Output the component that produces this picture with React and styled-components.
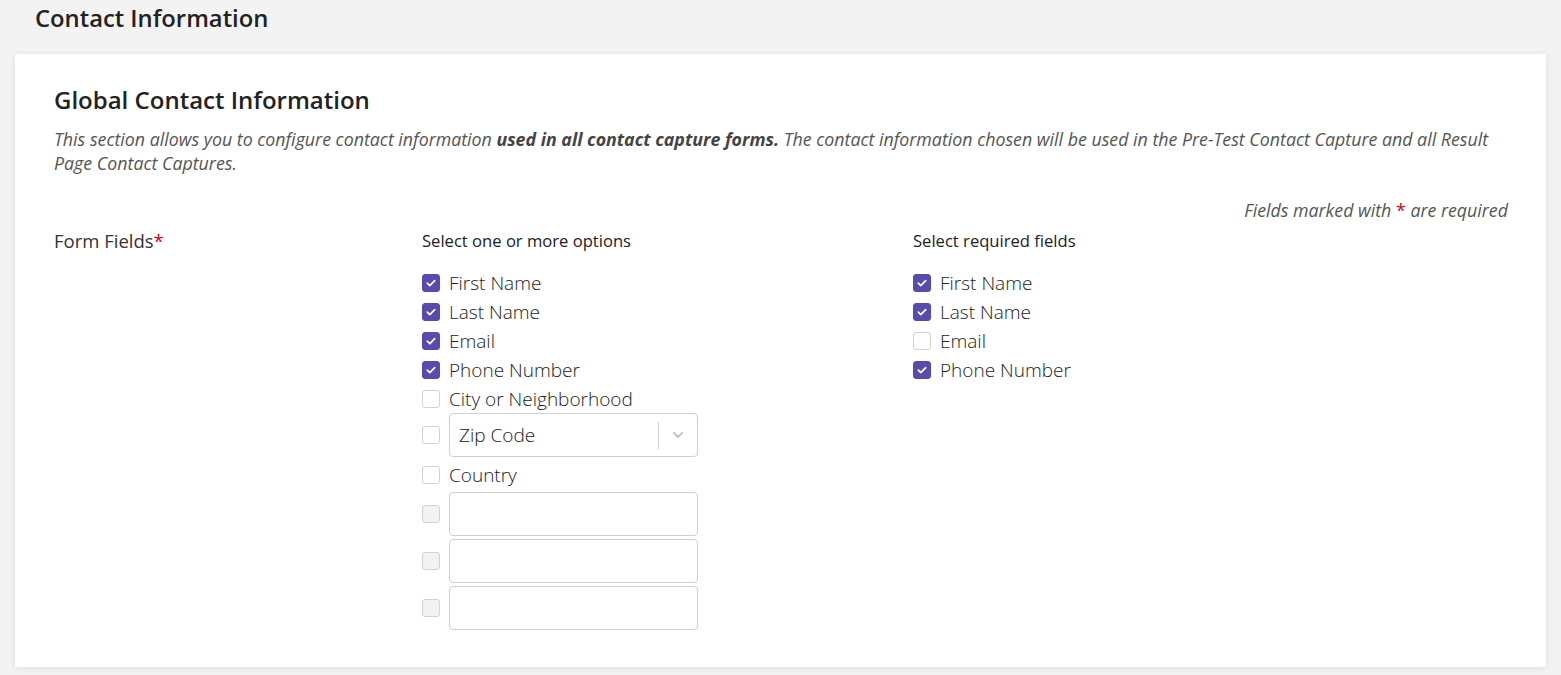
import React from 'react';
import styled, { createGlobalStyle } from 'styled-components';

const GlobalStyle = createGlobalStyle`
  body {
    margin: 0;
    background: #f3f3f3;
    font-family: 'Open Sans', 'Noto Sans', sans-serif;
    color: #222;
  }
`;

const options = [
  { label: 'First Name', checked: true },
  { label: 'Last Name', checked: true },
  { label: 'Email', checked: true },
  { label: 'Phone Number', checked: true },
  { label: 'City or Neighborhood', checked: false },
  { select: 'Zip Code' },
  { label: 'Country', checked: false },
  { input: true },
  { input: true },
  { input: true },
];

const required = [
  { label: 'First Name', checked: true },
  { label: 'Last Name', checked: true },
  { label: 'Email', checked: false },
  { label: 'Phone Number', checked: true },
];

const Check = ({ checked, disabled }) => (
  <Box checked={checked} disabled={disabled}>
    {checked && (
      <svg width="12" height="12" viewBox="0 0 12 12">
        <path d="M2.3 6.2l2.5 2.4 4.9-5" fill="none" stroke="#fff" strokeWidth="1.7" strokeLinecap="round" strokeLinejoin="round" />
      </svg>
    )}
  </Box>
);

const OptionList = ({ items }) => (
  <List>
    {items.map((item, i) => {
      if (item.select) {
        return (
          <FieldRow key={i} after>
            <Check />
            <Select>
              <SelectText>{item.select}</SelectText>
              <Separator />
              <Chevron>
                <svg width="14" height="14" viewBox="0 0 14 14">
                  <path d="M3 5l4 4 4-4" fill="none" stroke="#c4c4c4" strokeWidth="2" strokeLinecap="round" strokeLinejoin="round" />
                </svg>
              </Chevron>
            </Select>
          </FieldRow>
        );
      }
      if (item.input) {
        return (
          <FieldRow key={i} before>
            <Check disabled />
            <TextInput />
          </FieldRow>
        );
      }
      return (
        <Row key={i}>
          <Check checked={item.checked} />
          <Label>{item.label}</Label>
        </Row>
      );
    })}
  </List>
);

export default function App() {
  return (
    <>
      <GlobalStyle />
      <Page>
        <PageTitle>Contact Information</PageTitle>
        <Card>
          <Heading>Global Contact Information</Heading>
          <Description>
            This section allows you to configure contact information <b>used in all contact capture forms.</b> The
            contact information chosen will be used in the Pre-Test Contact Capture and all Result Page Contact
            Captures.
          </Description>
          <RequiredNote>
            Fields marked with <Star>*</Star> are required
          </RequiredNote>
          <Grid>
            <FieldLabel>
              Form Fields<Star>*</Star>
            </FieldLabel>
            <Column>
              <ColumnHeader>Select one or more options</ColumnHeader>
              <OptionList items={options} />
            </Column>
            <Column>
              <ColumnHeader>Select required fields</ColumnHeader>
              <OptionList items={required} />
            </Column>
          </Grid>
        </Card>
      </Page>
    </>
  );
}

const Page = styled.div`
  padding: 3px 15px 9px;
`;

const PageTitle = styled.h1`
  margin: 0 0 21px 20px;
  font-size: 23.8px;
  line-height: 30px;
  font-weight: 600;
  color: #222;
`;

const Card = styled.div`
  background: #fff;
  padding: 31px 38px 37px 39px;
  box-shadow: 0 1px 6px rgba(0, 0, 0, 0.09);
`;

const Heading = styled.h2`
  margin: 0 0 12px;
  font-size: 24px;
  line-height: 30px;
  font-weight: 600;
  color: #222;
`;

const Description = styled.p`
  margin: 0;
  font-size: 17.8px;
  line-height: 24px;
  font-style: italic;
  color: #555;

  b {
    font-weight: 700;
    color: #444;
  }
`;

const RequiredNote = styled.div`
  margin-top: 23px;
  text-align: right;
  font-size: 17.8px;
  line-height: 24px;
  font-style: italic;
  color: #555;
`;

const Star = styled.span`
  color: #d0021b;
  font-style: normal;
`;

const Grid = styled.div`
  display: grid;
  grid-template-columns: 368px 491px 1fr;
  margin-top: 6px;
`;

const FieldLabel = styled.div`
  font-size: 18.5px;
  line-height: 26px;
  font-weight: 400;
  color: #333;
`;

const Column = styled.div`
  display: flex;
  flex-direction: column;
`;

const ColumnHeader = styled.div`
  font-size: 16.6px;
  line-height: 22px;
  margin-top: 2px;
  color: #222;
`;

const List = styled.div`
  display: flex;
  flex-direction: column;
  margin-top: 16px;
`;

const Row = styled.div`
  display: flex;
  align-items: center;
  height: 29px;
`;

const FieldRow = styled.div`
  display: flex;
  align-items: center;
  margin-top: ${(p) => (p.before ? '3px' : '0')};
  margin-bottom: ${(p) => (p.after ? '3px' : '0')};
`;

const Box = styled.span`
  box-sizing: border-box;
  width: 18px;
  height: 18px;
  flex: none;
  margin-right: 9px;
  border-radius: 3px;
  display: flex;
  align-items: center;
  justify-content: center;
  border: 1px solid ${(p) => (p.checked ? '#584bae' : '#d2d2d2')};
  background: ${(p) => (p.checked ? '#584bae' : p.disabled ? '#f2f2f2' : '#fff')};
`;

const Label = styled.span`
  font-size: 19px;
  font-weight: 300;
  color: #222;
`;

const Select = styled.div`
  box-sizing: border-box;
  width: 249px;
  height: 44px;
  border: 1px solid #d0d0d0;
  border-radius: 4px;
  display: flex;
  align-items: center;
`;

const SelectText = styled.span`
  flex: 1;
  padding-left: 9px;
  font-size: 19px;
  font-weight: 300;
  color: #222;
`;

const Separator = styled.span`
  width: 1px;
  height: 27px;
  background: #d0d0d0;
`;

const Chevron = styled.span`
  width: 38px;
  display: flex;
  align-items: center;
  justify-content: center;
`;

const TextInput = styled.div`
  box-sizing: border-box;
  width: 249px;
  height: 44px;
  border: 1px solid #d0d0d0;
  border-radius: 4px;
  background: #fff;
`;
